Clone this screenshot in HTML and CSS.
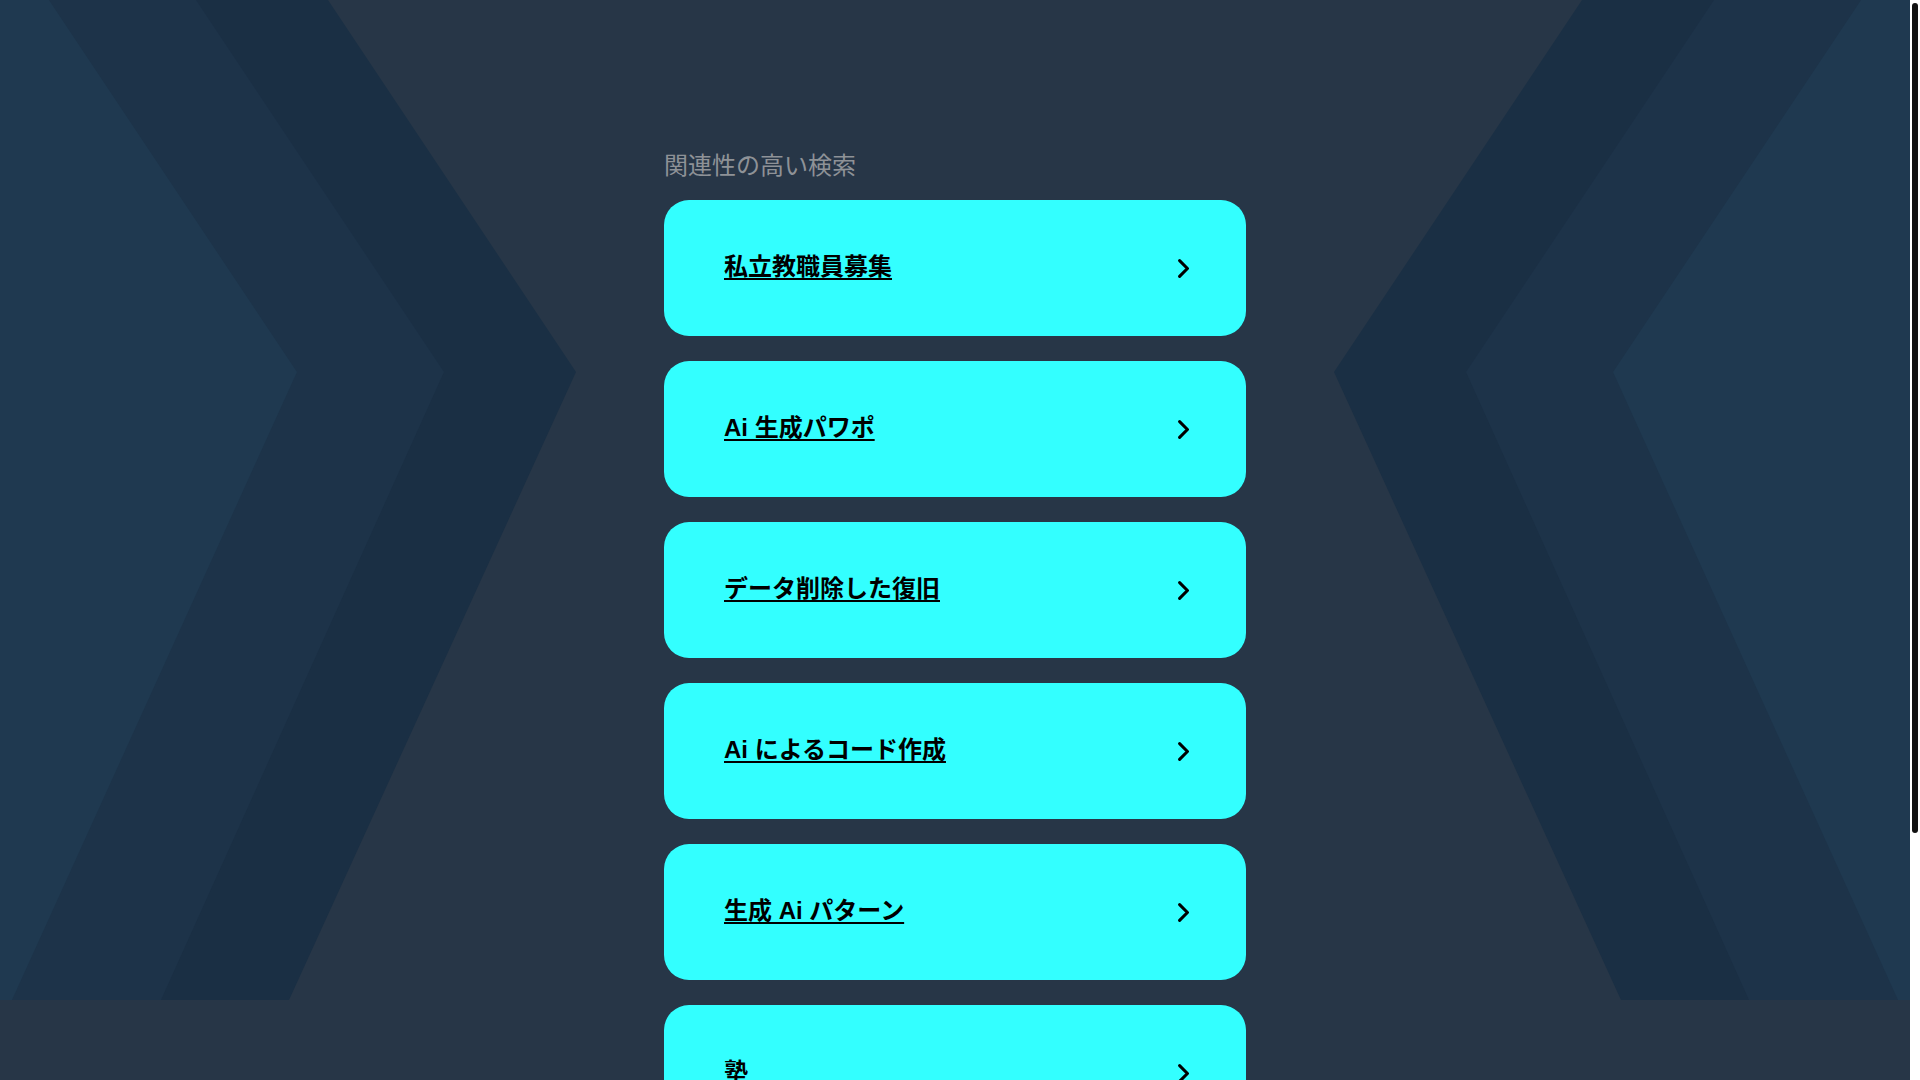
FILE: index.html
```html
<!DOCTYPE html>
<html lang="ja">
<head>
<meta charset="utf-8">
<title>関連性の高い検索</title>
<link rel="stylesheet" href="styles.css">
</head>
<body>
<div class="page">
  <svg class="backdrop" width="1910" height="1000" viewBox="0 0 1910 1000" preserveAspectRatio="none" aria-hidden="true">
    <polygon class="band-outer" points="0,0 328,0 576,372 289,1000 0,1000"/>
    <polygon class="band-mid" points="0,0 196,0 444,372 161,1000 0,1000"/>
    <polygon class="band-inner" points="0,0 49,0 297,372 12,1000 0,1000"/>
    <polygon class="band-outer" points="1910,0 1582,0 1334,372 1621,1000 1910,1000"/>
    <polygon class="band-mid" points="1910,0 1714,0 1466,372 1749,1000 1910,1000"/>
    <polygon class="band-inner" points="1910,0 1861,0 1613,372 1898,1000 1910,1000"/>
  </svg>
  <main class="content">
    <h2 class="heading">関連性の高い検索</h2>
    <div class="list">
      <a class="card" href="#"><span class="label">私立教職員募集</span><svg class="chev" width="11" height="19" viewBox="0 0 11 19"><polyline points="1.6,1.6 9.4,9.5 1.6,17.4"/></svg></a>
      <a class="card" href="#"><span class="label">Ai 生成パワポ</span><svg class="chev" width="11" height="19" viewBox="0 0 11 19"><polyline points="1.6,1.6 9.4,9.5 1.6,17.4"/></svg></a>
      <a class="card" href="#"><span class="label">データ削除した復旧</span><svg class="chev" width="11" height="19" viewBox="0 0 11 19"><polyline points="1.6,1.6 9.4,9.5 1.6,17.4"/></svg></a>
      <a class="card" href="#"><span class="label">Ai によるコード作成</span><svg class="chev" width="11" height="19" viewBox="0 0 11 19"><polyline points="1.6,1.6 9.4,9.5 1.6,17.4"/></svg></a>
      <a class="card" href="#"><span class="label">生成 Ai パターン</span><svg class="chev" width="11" height="19" viewBox="0 0 11 19"><polyline points="1.6,1.6 9.4,9.5 1.6,17.4"/></svg></a>
      <a class="card" href="#"><span class="label">塾</span><svg class="chev" width="11" height="19" viewBox="0 0 11 19"><polyline points="1.6,1.6 9.4,9.5 1.6,17.4"/></svg></a>
    </div>
  </main>
</div>
<div class="scrollbar" aria-hidden="true"><div class="scroll-thumb"></div></div>
</body>
</html>
```

FILE: styles.css
```css
html {
  background: #273647;
}
::-webkit-scrollbar {
  width: 0;
  height: 0;
}
body {
  margin: 0;
  background: #273647;
  font-family: "Liberation Sans", "Noto Sans CJK JP", sans-serif;
}
.page {
  position: relative;
  width: 1910px;
  min-height: 1400px;
}
.backdrop {
  position: absolute;
  left: 0;
  top: 0;
  width: 1910px;
  height: 1000px;
  display: block;
  z-index: 0;
}
.band-outer { fill: #1a2f44; }
.band-mid { fill: #1d3349; }
.band-inner { fill: #1f3950; }
.content {
  position: relative;
  z-index: 1;
  width: 582px;
  margin: 0 auto;
  padding: 150px 0 259px;
}
.heading {
  margin: 0 0 18px;
  font-size: 24px;
  line-height: 32px;
  font-weight: normal;
  color: #8e9297;
}
.list {
  display: flex;
  flex-direction: column;
  gap: 25px;
}
.card {
  display: flex;
  align-items: center;
  justify-content: space-between;
  height: 136px;
  box-sizing: border-box;
  padding: 0 57px 0 60px;
  border-radius: 25px;
  background: #33ffff;
  color: #000000;
  text-decoration: none;
}
.label {
  font-size: 24px;
  font-weight: bold;
  line-height: 30px;
  text-decoration: underline;
  text-decoration-thickness: 2px;
  text-underline-offset: 3px;
  margin-top: -3px;
}
.chev polyline {
  fill: none;
  stroke: #000000;
  stroke-width: 3;
  stroke-linecap: round;
  stroke-linejoin: miter;
}
.scrollbar {
  position: fixed;
  top: 0;
  right: 0;
  width: 10px;
  height: 100%;
  background: #ffffff;
  z-index: 5;
}
.scroll-thumb {
  margin: 3px 2px 0;
  width: 6px;
  height: 830px;
  border-radius: 3px;
  background: #111111;
}
```
